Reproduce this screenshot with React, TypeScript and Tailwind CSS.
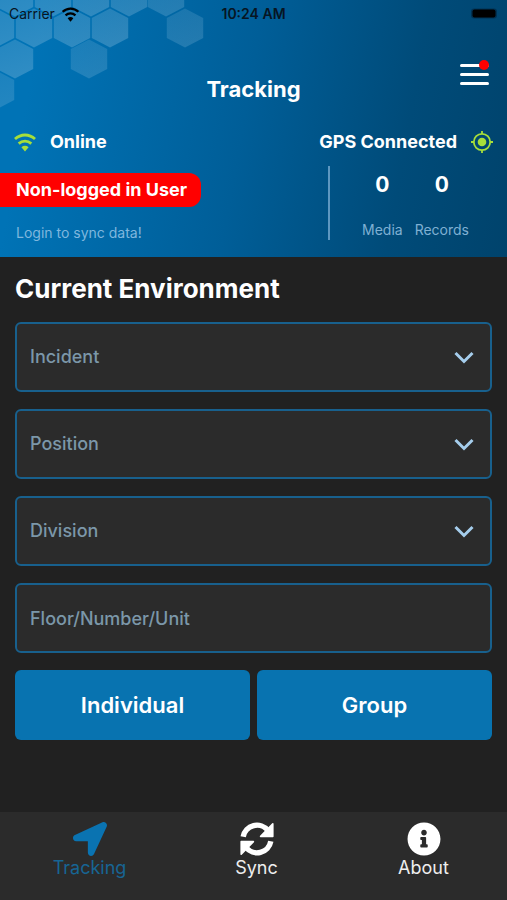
import { ReactNode } from 'react';
import { FaInfoCircle, FaLocationArrow } from 'react-icons/fa';

const HEXAGONS = [
  { x: 15, y: -3, opacity: 0.3 },
  { x: 53, y: -3, opacity: 0.3 },
  { x: 91, y: -3, opacity: 0.3 },
  { x: 129, y: -3, opacity: 0.28 },
  { x: 166, y: -3, opacity: 0.24 },
  { x: -4, y: 28, opacity: 0.3 },
  { x: 34, y: 28, opacity: 0.3 },
  { x: 72, y: 28, opacity: 0.3 },
  { x: 110, y: 28, opacity: 0.3 },
  { x: 185, y: 28, opacity: 0.22 },
  { x: 15, y: 59, opacity: 0.3 },
  { x: 89, y: 59, opacity: 0.22 },
  { x: -4, y: 90, opacity: 0.22 },
];

const SELECTS = [
  { id: 'incident', label: 'Incident' },
  { id: 'position', label: 'Position' },
  { id: 'division', label: 'Division' },
];

function HexPattern() {
  return (
    <svg className="pointer-events-none absolute top-0 left-0" width="210" height="112" aria-hidden="true">
      <defs>
        <linearGradient id="hex" x1="0" y1="0" x2="0.3" y2="1">
          <stop offset="0" stopColor="#9cc8e4" stopOpacity="0.75" />
          <stop offset="1" stopColor="#9cc8e4" stopOpacity="1" />
        </linearGradient>
      </defs>
      {HEXAGONS.map(({ x, y, opacity }) => (
        <polygon
          key={`${x}-${y}`}
          points="0,-19.5 18.2,-10 18.2,10 0,19.5 -18.2,10 -18.2,-10"
          transform={`translate(${x} ${y})`}
          fill="url(#hex)"
          opacity={opacity}
        />
      ))}
    </svg>
  );
}

function WifiIcon({ className }: { className?: string }) {
  return (
    <svg viewBox="0 0 22 19" className={className} fill="none" stroke="currentColor" strokeWidth="2.8" aria-hidden="true">
      <path d="M1 6.1C6.8 .6 15.2 .6 21 6.1" />
      <path d="M4.7 10.6C8.3 7.3 13.7 7.3 17.3 10.6" />
      <path d="M7.4 14.2C9.6 12.3 12.4 12.3 14.6 14.2L11 18.6Z" fill="currentColor" stroke="none" />
    </svg>
  );
}

function GpsIcon() {
  return (
    <svg viewBox="0 0 22 22" className="size-[22px] text-[#a6de3a]" fill="none" stroke="currentColor" strokeWidth="1.8" aria-hidden="true">
      <circle cx="11" cy="11" r="8.2" />
      <circle cx="11" cy="11" r="4.3" fill="currentColor" stroke="none" />
      <path d="M11 0v3M11 19v3M0 11h3M19 11h3" />
    </svg>
  );
}

function SyncIcon() {
  return (
    <svg viewBox="0 0 34 34" className="size-[34px]" fill="none" stroke="currentColor" aria-hidden="true">
      <path d="M3.2 14.8A14 14 0 0 1 28 8.6" strokeWidth="5.4" />
      <path d="M32.8 1.8V14.4H20.6Z" fill="currentColor" strokeWidth="1.6" strokeLinejoin="round" />
      <path d="M30.8 19.2A14 14 0 0 1 6 25.4" strokeWidth="5.4" />
      <path d="M1.2 32.2V19.6H13.4Z" fill="currentColor" strokeWidth="1.6" strokeLinejoin="round" />
    </svg>
  );
}

function StatusBar() {
  return (
    <div className="relative flex h-7 items-center justify-between px-[9px] text-sm text-[#071523]">
      <div className="flex flex-1 items-center gap-[6px]">
        <span>Carrier</span>
        <WifiIcon className="h-[15px] w-[19px] text-black" />
      </div>
      <span className="font-semibold">10:24 AM</span>
      <div className="flex flex-1 justify-end">
        <svg width="28" height="12" viewBox="0 0 28 12" aria-label="Battery full">
          <rect x="1" y="0.5" width="26" height="10" rx="3" fill="#00253f" opacity="0.6" />
          <rect x="2.5" y="1.5" width="23" height="8" rx="2" fill="#000" />
        </svg>
      </div>
    </div>
  );
}

function Counter({ value, label }: { value: number; label: string }) {
  return (
    <div className="flex flex-col items-center">
      <span className="text-[21px] leading-[38px] font-bold text-white">{value}</span>
      <span className="mt-4 text-sm leading-5 text-[#7fb0d3]">{label}</span>
    </div>
  );
}

function SelectField({ id, label }: { id: string; label: string }) {
  return (
    <div className="relative">
      <select
        id={id}
        aria-label={label}
        defaultValue=""
        className="h-[70px] w-full appearance-none rounded-md border-2 border-[#18608d] bg-[#2b2b2b] px-[13px] text-lg font-medium text-[#7b97a9]"
      >
        <option value="">{label}</option>
      </select>
      <svg
        className="pointer-events-none absolute top-[29px] right-[18px]"
        width="20"
        height="13"
        viewBox="0 0 20 13"
        fill="none"
        stroke="#a5cdec"
        strokeWidth="3"
        aria-hidden="true"
      >
        <path d="M1.5 2L10 10.5L18.5 2" />
      </svg>
    </div>
  );
}

function NavItem({ icon, label, active }: { icon: ReactNode; label: string; active?: boolean }) {
  return (
    <a
      href="#"
      aria-current={active ? 'page' : undefined}
      className={`flex flex-1 flex-col items-center pt-[10px] ${active ? 'text-[#0a73b1]' : 'text-white'}`}
    >
      {icon}
      <span className={`text-lg leading-6 ${active ? 'text-[#176594]' : 'text-[#eeeeee]'}`}>{label}</span>
    </a>
  );
}

export default function App() {
  return (
    <div className="flex min-h-screen flex-col bg-[#212121] font-['Inter','Liberation_Sans',sans-serif]">
      <header className="relative overflow-hidden bg-linear-[100deg,#0073b6_8%,#005e98_48%,#004b79_78%,#00436c] pb-[14px]">
        <HexPattern />
        <StatusBar />

        {/* Title row */}
        <div className="relative grid grid-cols-[1fr_auto_1fr] px-[18px] pt-[35px]">
          <h1 className="col-start-2 mt-3 text-[22px] leading-7 font-bold text-white">Tracking</h1>
          <button type="button" aria-label="Menu" className="relative h-[26px] w-[29px] justify-self-end">
            <span className="absolute inset-x-0 top-px flex flex-col gap-[6px]">
              <span className="h-[3px] rounded-sm bg-white" />
              <span className="h-[3px] rounded-sm bg-white" />
              <span className="h-[3px] rounded-sm bg-white" />
            </span>
            <span className="absolute -top-[3px] right-0 size-[10px] rounded-full bg-[#ff0000]" />
          </button>
        </div>

        {/* Connection state */}
        <div className="mt-[25px] flex items-center justify-between px-[14px] text-lg leading-7 font-bold text-white">
          <div className="flex items-center gap-[14px]">
            <WifiIcon className="h-[19px] w-[22px] text-[#a6de3a]" />
            <span>Online</span>
          </div>
          <div className="flex items-center gap-[14px]">
            <span>GPS Connected</span>
            <GpsIcon />
          </div>
        </div>

        <div className="mt-2 flex justify-between">
          <div className="pt-[9px]">
            <p className="rounded-r-xl bg-[#ff0000] py-[3px] pr-[14px] pl-4 text-lg leading-7 font-bold text-white">
              Non-logged in User
            </p>
            <p className="mt-4 pl-4 text-sm leading-5 text-[#7fb7de]">Login to sync data!</p>
          </div>
          <div className="mt-[2px] flex h-[74px] gap-3 border-l-2 border-[#5d97c0] pr-[38px] pl-8">
            <Counter value={0} label="Media" />
            <Counter value={0} label="Records" />
          </div>
        </div>
      </header>

      <main className="flex-1 px-[15px] pt-[14px]">
        <h2 className="text-[26px] leading-9 font-bold text-white">Current Environment</h2>
        <form className="mt-[15px] flex flex-col gap-[17px]">
          {SELECTS.map((field) => (
            <SelectField key={field.id} {...field} />
          ))}
          <input
            type="text"
            aria-label="Floor/Number/Unit"
            placeholder="Floor/Number/Unit"
            className="h-[70px] w-full rounded-md border-2 border-[#18608d] bg-[#2b2b2b] px-[13px] text-lg font-medium text-white placeholder:text-[#7b97a9]"
          />
          <div className="grid grid-cols-2 gap-[7px] text-[22px] font-semibold text-white">
            <button type="button" className="h-[70px] rounded-md bg-[#0873b0]">Individual</button>
            <button type="button" className="h-[70px] rounded-md bg-[#0873b0]">Group</button>
          </div>
        </form>
      </main>

      <nav className="flex h-[88px] bg-[#2b2b2b] pl-[6px]">
        <NavItem active icon={<FaLocationArrow className="size-[34px]" />} label="Tracking" />
        <NavItem icon={<SyncIcon />} label="Sync" />
        <NavItem icon={<FaInfoCircle className="size-[34px]" />} label="About" />
      </nav>
    </div>
  );
}
